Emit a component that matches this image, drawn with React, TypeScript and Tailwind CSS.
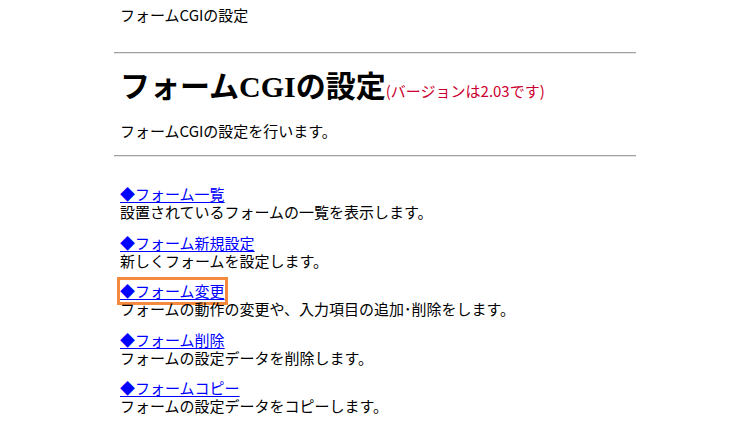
const items = [
  { label: 'フォーム一覧', desc: '設置されているフォームの一覧を表示します。' },
  { label: 'フォーム新規設定', desc: '新しくフォームを設定します。' },
  { label: 'フォーム変更', desc: 'フォームの動作の変更や、入力項目の追加･削除をします。', focused: true },
  { label: 'フォーム削除', desc: 'フォームの設定データを削除します。' },
  { label: 'フォームコピー', desc: 'フォームの設定データをコピーします。' },
];

function Rule() {
  return <div className="border-t border-b border-t-[#a0a0a0] border-b-[#e6e6e6]" />;
}

export default function App() {
  return (
    <div className="min-h-[440px] bg-white text-black font-['Noto_Sans_CJK_JP',sans-serif] text-[15px] leading-[18px]">
      <div className="mx-auto w-[522px]">
        <div className="pl-[6px] pt-[6px]">フォームCGIの設定</div>

        <div className="mt-[28px]">
          <Rule />
        </div>

        <h1 className="mt-[16px] pl-[6px] flex items-baseline">
          <span className="font-['Liberation_Serif','Noto_Sans_CJK_JP',serif] text-[30px] leading-[34px] font-bold">
            フォームCGIの設定
          </span>
          <span className="text-[15px] text-[#cc0030]">(バージョンは2.03です)</span>
        </h1>

        <p className="mt-[18px] pl-[6px]">フォームCGIの設定を行います。</p>

        <div className="mt-[15px]">
          <Rule />
        </div>

        <div className="mt-[28px] pl-[6px] flex flex-col gap-[12.5px]">
          {items.map((item) => (
            <div key={item.label}>
              <a
                href="#"
                className={
                  'inline-block py-[2px] -my-[2px] text-[#0000ff] underline underline-offset-2 ' +
                  (item.focused ? 'outline-[3px] outline-solid outline-[#f5893e] outline-offset-0' : '')
                }
              >
                ◆{item.label}
              </a>
              <div>{item.desc}</div>
            </div>
          ))}
        </div>
      </div>
    </div>
  );
}
